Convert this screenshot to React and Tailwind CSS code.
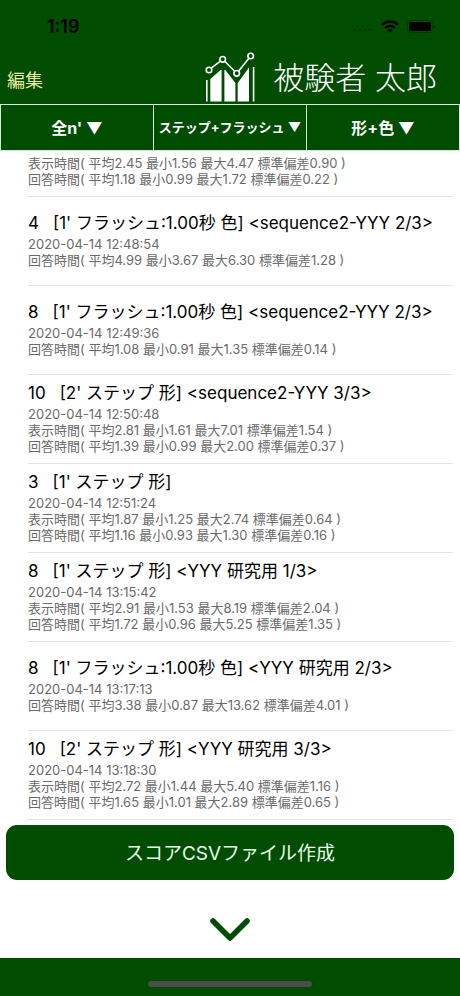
import { useState } from "react";

const filters = [
  { label: "n数", options: ["全n'", "1'", "2'"], size: "text-[16px]" },
  { label: "表示方法", options: ["ステップ+フラッシュ", "ステップ", "フラッシュ"], size: "text-[13px]" },
  { label: "課題", options: ["形+色", "形", "色"], size: "text-[16px]" },
];

const scores = [
  // continuation of the previous entry, only its times are in view
  {
    id: 1,
    lines: [
      "表示時間( 平均2.45 最小1.56 最大4.47 標準偏差0.90 )",
      "回答時間( 平均1.18 最小0.99 最大1.72 標準偏差0.22 )",
    ],
  },
  {
    id: 2,
    score: "4",
    title: "[1' フラッシュ:1.00秒 色] <sequence2-YYY 2/3>",
    date: "2020-04-14 12:48:54",
    lines: ["回答時間( 平均4.99 最小3.67 最大6.30 標準偏差1.28 )"],
  },
  {
    id: 3,
    score: "8",
    title: "[1' フラッシュ:1.00秒 色] <sequence2-YYY 2/3>",
    date: "2020-04-14 12:49:36",
    lines: ["回答時間( 平均1.08 最小0.91 最大1.35 標準偏差0.14 )"],
  },
  {
    id: 4,
    score: "10",
    title: "[2' ステップ 形] <sequence2-YYY 3/3>",
    date: "2020-04-14 12:50:48",
    lines: [
      "表示時間( 平均2.81 最小1.61 最大7.01 標準偏差1.54 )",
      "回答時間( 平均1.39 最小0.99 最大2.00 標準偏差0.37 )",
    ],
  },
  {
    id: 5,
    score: "3",
    title: "[1' ステップ 形]",
    date: "2020-04-14 12:51:24",
    lines: [
      "表示時間( 平均1.87 最小1.25 最大2.74 標準偏差0.64 )",
      "回答時間( 平均1.16 最小0.93 最大1.30 標準偏差0.16 )",
    ],
  },
  {
    id: 6,
    score: "8",
    title: "[1' ステップ 形] <YYY 研究用 1/3>",
    date: "2020-04-14 13:15:42",
    lines: [
      "表示時間( 平均2.91 最小1.53 最大8.19 標準偏差2.04 )",
      "回答時間( 平均1.72 最小0.96 最大5.25 標準偏差1.35 )",
    ],
  },
  {
    id: 7,
    score: "8",
    title: "[1' フラッシュ:1.00秒 色] <YYY 研究用 2/3>",
    date: "2020-04-14 13:17:13",
    lines: ["回答時間( 平均3.38 最小0.87 最大13.62 標準偏差4.01 )"],
  },
  {
    id: 8,
    score: "10",
    title: "[2' ステップ 形] <YYY 研究用 3/3>",
    date: "2020-04-14 13:18:30",
    lines: [
      "表示時間( 平均2.72 最小1.44 最大5.40 標準偏差1.16 )",
      "回答時間( 平均1.65 最小1.01 最大2.89 標準偏差0.65 )",
    ],
  },
];

function StatusBar() {
  return (
    <div className="flex h-[52px] items-center justify-between pl-[47px] pr-[25px] text-black">
      <span className="text-[18px] font-semibold">1:19</span>
      <div className="flex items-center gap-2">
        <svg className="h-4 w-5" viewBox="0 0 20 16" fill="#003a00">
          <circle cx="2" cy="12" r="1.2" />
          <circle cx="7" cy="12" r="1.2" />
          <circle cx="12" cy="12" r="1.2" />
          <circle cx="17" cy="12" r="1.2" />
        </svg>
        <svg className="h-[13px] w-[18px]" viewBox="0 0 18 13" fill="none" stroke="currentColor" strokeWidth="2.4">
          <path d="M1 4.8a11.5 11.5 0 0 1 16 0" />
          <path d="M4 8a7.2 7.2 0 0 1 10 0" />
          <path d="M9 12.8 6.4 10.2a3.8 3.8 0 0 1 5.2 0z" fill="currentColor" stroke="none" />
        </svg>
        <svg className="h-[13px] w-7" viewBox="0 0 28 13">
          <rect x="0.5" y="0.5" width="25" height="12" rx="3.5" fill="none" stroke="#003a00" />
          <rect x="2" y="2" width="22" height="9" rx="2" fill="#000" />
          <path d="M26.6 4.4v4.2c1.4-.8 1.4-3.4 0-4.2z" fill="#002000" />
        </svg>
      </div>
    </div>
  );
}

function Logo() {
  return (
    <svg className="h-[52px] w-[50px]" viewBox="0 0 50 52" fill="none" stroke="#fff">
      <path d="M1.8 28v21.5M48.6 15v34.5" strokeWidth="1.6" />
      <path d="M5.3 27 15.6 18h1v31.5H5.3zM19.4 18h1l10 13v18.5h-11zM32.7 31 44 15.5v34H32.7z" fill="#fff" stroke="none" />
      <path d="M6.2 16.2 15.4 9.2M19.8 9.3l9.8 9.9M33.5 19.2 43.9 6.2" strokeWidth="1.6" />
      <circle cx="4" cy="18" r="2.8" strokeWidth="1.6" />
      <circle cx="17.7" cy="7.3" r="2.8" strokeWidth="1.6" />
      <circle cx="31.7" cy="21.3" r="2.8" strokeWidth="1.6" />
      <circle cx="45.7" cy="4" r="2.8" strokeWidth="1.6" />
    </svg>
  );
}

function Filter({ label, options, size }) {
  const [value, setValue] = useState(options[0]);

  return (
    <select
      aria-label={label}
      value={value}
      onChange={(e) => setValue(e.target.value)}
      className={`w-full min-w-0 cursor-pointer appearance-none bg-[#004c00] text-center font-bold text-white outline-none [text-align-last:center] ${size}`}
    >
      {options.map((option) => (
        <option key={option} value={option}>
          {`${option} ▼`}
        </option>
      ))}
    </select>
  );
}

function ScoreRow({ score, title, date, lines }) {
  return (
    <li
      className={`ml-7 mr-[7px] flex shrink-0 flex-col justify-center border-b border-[#e4e4e4] whitespace-nowrap ${
        title ? "h-[89px] pb-1" : "h-[46px] pb-[6px]"
      }`}
    >
      {title && (
        <h2 className="flex gap-[14px] text-[17px] leading-[26px] text-black">
          <span>{score}</span>
          <span>{title}</span>
        </h2>
      )}
      <div className="text-[13px] leading-4 text-[#6a6a6a]">
        {date && <p>{date}</p>}
        {lines.map((line) => (
          <p key={line}>{line}</p>
        ))}
      </div>
    </li>
  );
}

export default function App() {
  return (
    <div className="flex h-screen flex-col bg-white font-['Inter','Noto_Sans_CJK_JP',sans-serif]">
      <header className="bg-[#004c00]">
        <StatusBar />
        <div className="flex h-[52px] items-center justify-between pl-[7px] pr-[23px]">
          <button className="pt-1 text-[18px] text-[#e8eba0]">編集</button>
          <div className="flex items-center gap-[18px]">
            <Logo />
            <h1 className="text-[31px] font-light leading-[50px] text-white">被験者 太郎</h1>
          </div>
        </div>
        <div className="grid h-[47px] grid-cols-3 gap-px border border-[#d5ecd5] bg-[#d5ecd5]">
          {filters.map((filter) => (
            <Filter key={filter.label} {...filter} />
          ))}
        </div>
      </header>

      <ul className="flex min-h-0 flex-1 flex-col justify-end overflow-hidden">
        {scores.map((item) => (
          <ScoreRow key={item.id} {...item} />
        ))}
      </ul>

      <div className="px-[6px] pt-[5px]">
        <button className="h-[55px] w-full rounded-[11px] bg-[#004c00] pt-[3px] text-[19px] text-[#e6ffe6]">
          スコアCSVファイル作成
        </button>
      </div>

      <div className="flex h-[78px] items-center justify-center pt-[22px]">
        <button aria-label="閉じる">
          <svg className="h-6 w-10" viewBox="0 0 40 24" fill="none" stroke="#004c00" strokeWidth="5.5" strokeLinecap="round" strokeLinejoin="round">
            <path d="M3 3 20 20 37 3" />
          </svg>
        </button>
      </div>

      <footer className="flex h-[38px] items-end justify-center bg-[#004c00] pb-[9px]">
        <div className="h-[6px] w-[164px] rounded-full bg-[#4a4d4a]" />
      </footer>
    </div>
  );
}
